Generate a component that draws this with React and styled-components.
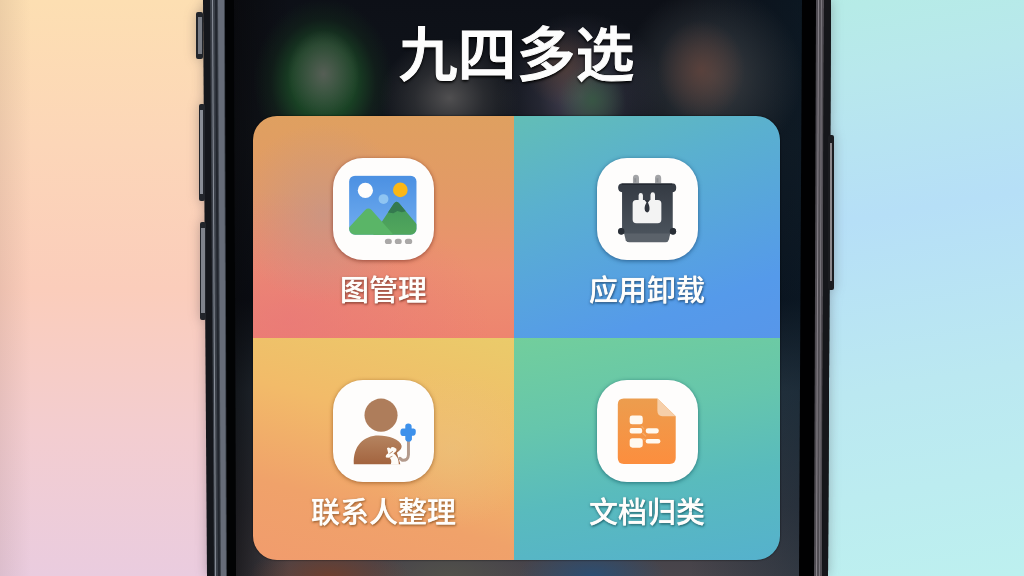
import React from "react";
import styled, { createGlobalStyle } from "styled-components";

const GlobalStyle = createGlobalStyle`
  * {
    box-sizing: border-box;
  }
  body {
    margin: 0;
    font-family: "Noto Sans CJK SC", "Noto Sans", sans-serif;
  }
`;

const Stage = styled.div`
  display: grid;
  grid-template-columns: 196fr 640fr 188fr;
  min-height: 100vh;
  overflow: hidden;
  background:
    linear-gradient(90deg, rgba(120, 90, 80, 0.12), transparent 3%) no-repeat,
    linear-gradient(180deg, #fddfb2 0%, #fcd6b8 25%, #fbcdbb 50%, #f3cdd0 75%, #eaccdf 100%) left / 50% 100% no-repeat,
    linear-gradient(170deg, #b4eee2 0%, #b8e8ec 20%, #b6dff7 42%, #bbe8f1 68%, #bdf0ef 100%) right / 50% 100% no-repeat;
`;
const Phone = styled.main`
  grid-column: 2;
  display: flex;
  align-items: stretch;
  filter: drop-shadow(0 0 6px rgba(70, 60, 70, 0.35));
`;
const Rail = styled.svg`
  position: relative;
  flex: none;
  display: block;
  width: 40px;
  height: auto;
`;
const Screen = styled.section`
  flex: 1;
  margin: 0 -8px 0 -4px;
  padding: 12px 24px 16px 21px;
  background:
    radial-gradient(ellipse 36px 44px at 16% 74px, rgba(92, 96, 90, 0.9), transparent),
    radial-gradient(ellipse 70px 84px at 16% 82px, rgba(30, 84, 44, 0.95), rgba(27, 74, 38, 0.85) 45%, rgba(20, 46, 28, 0.4) 75%, transparent),
    radial-gradient(ellipse 70px 60px at 38% 98px, rgba(96, 94, 94, 0.8), rgba(66, 66, 68, 0.5) 50%, transparent),
    radial-gradient(ellipse 34px 36px at 63% 100px, rgba(54, 92, 66, 0.8), transparent),
    radial-gradient(ellipse 40px 40px at 58% 66px, rgba(98, 70, 56, 0.6), transparent),
    radial-gradient(ellipse 84px 84px at 61% 96px, rgba(92, 84, 106, 0.8), rgba(56, 56, 72, 0.5) 50%, transparent),
    radial-gradient(ellipse 44px 50px at 82% 70px, rgba(100, 68, 60, 0.75), transparent),
    radial-gradient(ellipse 90px 90px at 84% 76px, rgba(70, 70, 72, 0.85), rgba(50, 56, 62, 0.6) 50%, transparent),
    radial-gradient(ellipse 80px 34px at 17% 100%, rgba(112, 62, 44, 0.9), transparent),
    radial-gradient(ellipse 80px 34px at 38% 100%, rgba(82, 82, 74, 0.9), transparent),
    radial-gradient(ellipse 74px 34px at 63% 100%, rgba(42, 78, 116, 0.95), transparent),
    linear-gradient(90deg, transparent 80%, rgba(10, 34, 50, 0.4)),
    linear-gradient(90deg, rgba(8, 8, 10, 0.7), transparent 10%),
    linear-gradient(180deg, #0d1017 0%, #11151c 25%, #0b0f18 52%, #2a343e 68%, #3a3a42 88%, #4a464c 100%);
`;
const Title = styled.h1`
  margin: 0 0 26px;
  color: #fdfdfd;
  font-size: 59px;
  font-weight: 500;
  line-height: 78px;
  text-align: center;
  -webkit-text-stroke: 1px #fdfdfd;
  text-shadow: 0 0 2px #000, 0 2px 3px #000;
`;
const Folder = styled.div`
  display: grid;
  grid-template-columns: 261fr 266fr;
  border-radius: 24px;
  overflow: hidden;
  box-shadow: 0 0 2px rgba(0, 0, 0, 0.8);
`;
const Tile = styled.button`
  display: flex;
  flex-direction: column;
  align-items: center;
  gap: 10px;
  padding: 42px 0 32px;
  border: 0;
  background: ${p => p.$fill};
  color: #fffefc;
  font: inherit;
  cursor: pointer;
`;
const IconPlate = styled.span`
  width: 101px;
  height: 102px;
  border-radius: 30px;
  background: #fefdfc;
  box-shadow: 0 1px 4px ${p => p.$shade};
`;
const Glyph = styled.svg`
  display: block;
  width: 100%;
  height: 100%;
`;
const Label = styled.span`
  font-size: 29px;
  font-weight: 500;
  line-height: 36px;
  text-shadow: 0 0 1px #fffefc, 1px 1px 2px ${p => p.$shade}, 0 1px 3px ${p => p.$shade};
`;

const GalleryIcon = () => (
  <Glyph viewBox="0 0 102 102" aria-hidden="true">
    <defs>
      <linearGradient id="sky" x1="0" y1="0" x2="0" y2="1">
        <stop offset="0" stopColor="#4b90e2" />
        <stop offset="1" stopColor="#72aef0" />
      </linearGradient>
      <linearGradient id="hill" x1="0" y1="0" x2="0" y2="1">
        <stop offset="0" stopColor="#42965a" />
        <stop offset="1" stopColor="#52a85c" />
      </linearGradient>
      <clipPath id="frame">
        <rect x="16.3" y="17.3" width="68" height="59.7" rx="6" />
      </clipPath>
    </defs>
    <g clipPath="url(#frame)">
      <rect x="16" y="17" width="69" height="61" fill="url(#sky)" />
      <circle cx="32.7" cy="32.3" r="7.7" fill="#fffefc" />
      <circle cx="68" cy="31.7" r="7.4" fill="#fbb716" />
      <circle cx="51" cy="41" r="5" fill="#8fc5f2" />
      <path d="M40 78 L61.5 45.5 Q64.3 42 67 45.5 L86 68 V78 Z" fill="url(#hill)" />
      <path d="M55.5 54.5 L61.5 45.5 Q64.3 42 67 45.5 L73.5 53.2 L69.5 54.2 L65 53 L61 55.3 Z" fill="#34794f" />
      <path d="M14 72 L32.5 52 Q35.7 49 39 52 L62 78 H14 Z" fill="#5ab567" />
    </g>
    <rect x="52.4" y="81" width="7" height="5.4" rx="2.7" fill="#aaa8a7" />
    <rect x="62.4" y="81" width="7" height="5.4" rx="2.7" fill="#aaa8a7" />
    <rect x="72.6" y="81" width="7.4" height="5.4" rx="2.7" fill="#aaa8a7" />
  </Glyph>
);

const UninstallIcon = () => (
  <Glyph viewBox="0 0 102 102" aria-hidden="true">
    <defs>
      <linearGradient id="bin" x1="0" y1="0" x2="0" y2="1">
        <stop offset="0" stopColor="#343a43" />
        <stop offset="1" stopColor="#4b535c" />
      </linearGradient>
    </defs>
    <path d="M36.3 25 V19.5 Q36.5 16.3 39.3 16.3 Q42.2 16.3 42.4 19.5 V25 Z M58.6 25 V19.5 Q58.8 16.3 61.7 16.3 Q64.6 16.3 64.8 19.5 V25 Z" fill="#a3a4a7" />
    <path d="M38.6 20 V24 M61 20 V24" stroke="#8d8f93" strokeWidth="2" />
    <path d="M27 74 H74.5 L72.5 82 Q71.8 84.7 69 84.7 H33 Q30 84.7 29 82.5 Z" fill="#5b626a" />
    <path
      d="M24.5 25.3 H77 Q80 25.6 80 29.5 Q80 33.8 76.5 34 V70 Q80 70.8 80 74 Q79.5 77.2 76.5 77 L73 75.7 H28 L25 77 Q21.5 77 21.3 73.7 Q21.5 70.5 25.3 70 V34 Q21.5 33.8 21.3 29.6 Q21.5 25.6 24.5 25.3 Z"
      fill="url(#bin)"
    />
    <path d="M25 25.8 H76" stroke="#1f242c" strokeWidth="1.2" />
    <circle cx="24.5" cy="73.5" r="3.2" fill="#292e36" />
    <circle cx="76.7" cy="73.5" r="3.2" fill="#292e36" />
    <path
      d="M39.5 42 H42 V37 Q42.2 34.8 44.2 34.8 Q46.2 34.8 46.4 37 V42 H54 V36.5 Q54.3 34.2 56.3 34.2 Q58.4 34.2 58.6 36.5 V42 H61.5 Q65 42.3 65 45.5 V61.5 Q65 65.3 61.2 65.3 H39.8 Q36 65.3 36 61.5 V45.5 Q36 42.3 39.5 42 Z"
      fill="#f3f3f3"
    />
    <path d="M48 42 H53.5 L51.5 44.5 Q54 50 52.6 53 Q50.8 56 48.6 53 Q47 49.5 50 44.5 Z" fill="#2f343c" />
  </Glyph>
);

const ContactIcon = () => (
  <Glyph viewBox="0 0 102 102" aria-hidden="true">
    <defs>
      <linearGradient id="torso" x1="0" y1="0" x2="0" y2="1">
        <stop offset="0" stopColor="#b58460" />
        <stop offset="1" stopColor="#a3643f" />
      </linearGradient>
    </defs>
    <circle cx="48.5" cy="35" r="16.7" fill="#ae7d5b" />
    <path d="M21 84.5 C20 66 31 55.5 46 55.5 C56 55.5 68 59.5 69.3 66 C69.5 69.5 67 71 64.5 73 L68 84.5 Z" fill="url(#torso)" />
    <path
      d="M54.5 68.5 Q56 66.5 58 69 Q58.5 66.5 61.5 67.5 L64 69 Q64.8 72 61 73.5 Q66.5 77 66.5 85 H58.2 Q60 80.5 57 78 L53.5 77.8 Q52.5 75.5 55.8 73.5 Z"
      fill="#fefcf8"
    />
    <path d="M57 74 L60.5 71.5 M57 77.8 L60 76.5" stroke="#bb8a68" strokeWidth="1" />
    <path d="M76.2 61 V75 Q76 81 70 80.5 L67.5 78.5" fill="none" stroke="#b39a8c" strokeWidth="3" strokeLinecap="round" />
    <path
      d="M73 46 Q73 43.4 76 43.4 Q79.2 43.4 79.4 46 V48.6 H81.5 Q84 49 83.6 52.3 Q83.5 55.8 81 55.9 H79.7 V59.5 Q79 61.8 76.5 61.8 Q73.6 61.8 73 59.5 V56 H70.5 Q68 55.8 68 52.2 Q68 49 70.5 48.6 H73 Z"
      fill="#3e91eb"
    />
  </Glyph>
);

const DocumentIcon = () => (
  <Glyph viewBox="0 0 102 102" aria-hidden="true">
    <defs>
      <linearGradient id="page" x1="0" y1="0" x2="0" y2="1">
        <stop offset="0" stopColor="#ec9d4e" />
        <stop offset="1" stopColor="#fc8e3e" />
      </linearGradient>
    </defs>
    <path d="M27 18.3 H61 L79.5 36 V78 Q79.5 84.3 73.5 84.3 H27 Q21 84.3 21 78 V24.5 Q21 18.3 27 18.3 Z" fill="url(#page)" />
    <path d="M61 18.3 L79.5 36 H66 Q61 36 61 30.5 Z" fill="#f6cfa9" />
    <g fill="#fff9f0">
      <rect x="33" y="35.3" width="13.2" height="9" rx="2.5" />
      <rect x="33" y="48" width="12.6" height="5.4" rx="2" />
      <rect x="33" y="58.2" width="13.2" height="9.6" rx="2.8" />
      <rect x="49.2" y="48.2" width="13.2" height="5.2" rx="2.4" />
      <rect x="49.2" y="59" width="14.8" height="4.6" rx="2.2" />
    </g>
    <path d="M45 46 L47.5 49 M46 53 L49.5 56.5 M46 58.5 L49 60" stroke="#f8c894" strokeWidth="1.2" opacity="0.5" />
  </Glyph>
);

const tiles = [
  {
    name: "图管理",
    Icon: GalleryIcon,
    shade: "rgba(125, 50, 35, 0.75)",
    fill:
      "radial-gradient(circle 90px at 27% 44%, rgba(192, 150, 140, 0.65), transparent), radial-gradient(ellipse 200px 130px at 14% 92%, rgba(232, 116, 124, 0.6), transparent), linear-gradient(180deg, #dfa060 0%, #e39a66 35%, #ec9070 70%, #ee846f 100%)"
  },
  {
    name: "应用卸载",
    Icon: UninstallIcon,
    shade: "rgba(20, 65, 110, 0.7)",
    fill: "linear-gradient(160deg, #62beb6 0%, #5ab0cf 32%, #57a3df 60%, #559aea 80%, #5796ea 100%)"
  },
  {
    name: "联系人整理",
    Icon: ContactIcon,
    shade: "rgba(135, 75, 25, 0.7)",
    fill:
      "radial-gradient(circle 80px at 76% 50%, rgba(232, 196, 130, 0.5), transparent), linear-gradient(195deg, #eacb6a 0%, #f2bb69 38%, #f0a26a 72%, #f19c6d 100%)"
  },
  {
    name: "文档归类",
    Icon: DocumentIcon,
    shade: "rgba(15, 85, 95, 0.7)",
    fill: "linear-gradient(170deg, #72ce9c 0%, #66c6ac 35%, #59bbbd 65%, #55b1cd 100%)"
  }
];

// Side rails lean inwards a little towards the bottom
const LeftRail = () => (
  <Rail viewBox="0 0 40 576" preserveAspectRatio="none" aria-hidden="true">
    <polygon points="7,0 38,0 40,576 11,576" fill="#14161b" />
    <polygon points="14,0 29,0 31,576 18,576" fill="#3b4049" />
    <polygon points="16,0 17,0 20,576 19,576" fill="#8a8f9a" />
    <polygon points="19,0 21,0 24,576 22,576" fill="#22262e" />
    <polygon points="22,0 28,0 30,576 25,576" fill="#666c78" />
    <polygon points="29,0 38,0 40,576 31,576" fill="#020304" />
    <rect x="0" y="12" width="7" height="47" rx="2" fill="#22252b" />
    <rect x="2" y="17" width="4" height="37" fill="#777b84" />
    <rect x="3" y="104" width="6" height="97" rx="2" fill="#22252b" />
    <rect x="4" y="110" width="3" height="84" fill="#898d96" />
    <rect x="4" y="222" width="6" height="98" rx="2" fill="#22252b" />
    <rect x="5" y="228" width="4" height="85" fill="#7f838c" />
  </Rail>
);

const RightRail = () => (
  <Rail viewBox="0 0 40 576" preserveAspectRatio="none" aria-hidden="true">
    <polygon points="6,0 35,0 32,576 3,576" fill="#010102" />
    <polygon points="20,0 28,0 26,576 18,576" fill="#4f4c52" />
    <polygon points="22,0 23,0 21,576 20,576" fill="#88838a" />
    <polygon points="25,0 26,0 24,576 23,576" fill="#7a767d" />
    <polygon points="28,0 35,0 32,576 26,576" fill="#15161a" />
    <rect x="32" y="135" width="6" height="155" rx="2" fill="#1b1c20" />
    <rect x="34" y="143" width="2" height="138" fill="#8b878b" />
  </Rail>
);

const App = () => (
  <>
    <GlobalStyle />
    <Stage>
      <Phone>
        <LeftRail />
        <Screen>
          <Title>九四多选</Title>
          <Folder>
            {tiles.map(({ name, Icon, shade, fill }) => (
              <Tile key={name} type="button" $fill={fill}>
                <IconPlate $shade={shade}>
                  <Icon />
                </IconPlate>
                <Label $shade={shade}>{name}</Label>
              </Tile>
            ))}
          </Folder>
        </Screen>
        <RightRail />
      </Phone>
    </Stage>
  </>
);

export default App;
